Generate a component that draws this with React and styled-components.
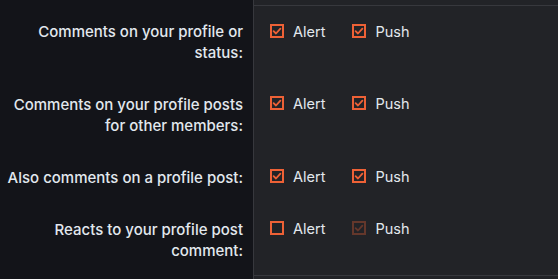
import React from "react";
import styled, { createGlobalStyle } from "styled-components";

const Global = createGlobalStyle`
  html, body { margin: 0; padding: 0; background: #131419; }
  body { font-family: Inter, "Noto Sans", sans-serif; -webkit-font-smoothing: antialiased; }
`;

const Form = styled.div`
  display: grid;
  grid-template-columns: 253px 1fr;
  width: 558px;
  height: 279px;
  overflow: hidden;
  align-content: start;
`;

const Label = styled.div`
  padding: 15.5px 10px 15.5px 0;
  text-align: right;
  font-size: 15px;
  line-height: 21px;
  font-weight: 500;
  color: #e2e8ee;
`;

const Panel = styled.div`
  background: #222327;
  border-left: 1px solid #37383d;
  padding: ${(p) => (p.$spacer ? "0" : "15.5px 16px")};
  height: ${(p) => (p.$spacer ? p.$h : "auto")};
  border-top: ${(p) => (p.$first ? "1px solid #37383d" : "none")};
  border-bottom: ${(p) => (p.$last ? "1px solid #37383d" : "none")};
`;

const Options = styled.div`
  display: flex;
  gap: 27px;
  line-height: 21px;
`;

const Option = styled.label`
  display: inline-flex;
  align-items: center;
  gap: 9px;
  font-size: 14.5px;
  color: #e2e8ee;
  height: 21px;
  position: relative;
  top: -1px;
`;

const Box = styled.svg`
  width: 14px;
  height: 14px;
  flex: none;
  opacity: ${(p) => (p.$disabled ? 0.32 : 1)};
`;

function Check({ checked, disabled }) {
  return (
    <Box viewBox="0 0 14 14" $disabled={disabled}>
      <rect x="1" y="1" width="12" height="12" fill="none" stroke="#ee6136" strokeWidth="2" />
      {checked && (
        <path d="M3.6 7.2 L6 9.5 L10.4 4.6" fill="none" stroke="#ee6136" strokeWidth="1.8" strokeLinecap="round" strokeLinejoin="round" />
      )}
    </Box>
  );
}

const rows = [
  { label: ["Comments on your profile or", "status:"], alert: true, push: true },
  { label: ["Comments on your profile posts", "for other members:"], alert: true, push: true },
  { label: ["Also comments on a profile post:"], alert: true, push: true },
  { label: ["Reacts to your profile post", "comment:"], alert: false, push: true, pushDisabled: true },
];

export default function App() {
  return (
    <>
      <Global />
      <Form>
        <div />
        <Panel $spacer $h="5px" />
        {rows.map((r, i) => (
          <React.Fragment key={i}>
            <Label>
              {r.label.map((l, j) => (
                <React.Fragment key={j}>
                  {j > 0 && <br />}
                  {l}
                </React.Fragment>
              ))}
            </Label>
            <Panel $first={i === 0} $last={i === rows.length - 1}>
              <Options>
                <Option>
                  <Check checked={r.alert} />
                  Alert
                </Option>
                <Option>
                  <Check checked={r.push} disabled={r.pushDisabled} />
                  Push
                </Option>
              </Options>
            </Panel>
          </React.Fragment>
        ))}
        <div />
        <Panel $spacer $h="20px" />
      </Form>
    </>
  );
}
